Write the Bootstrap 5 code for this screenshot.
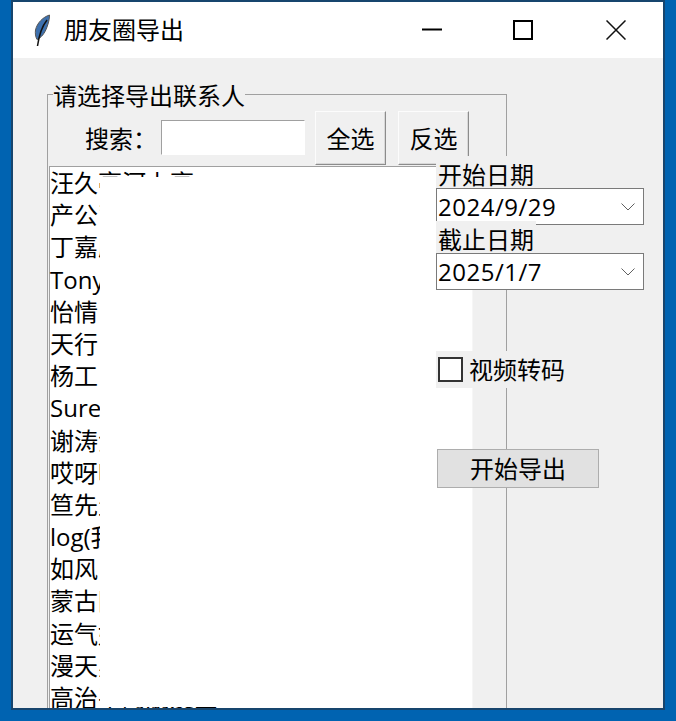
<!DOCTYPE html>
<html lang="zh-CN">
<head>
  <meta charset="UTF-8" />
  <meta name="viewport" content="width=device-width, initial-scale=1" />
  <title>朋友圈导出</title>
  <link href="https://cdn.jsdelivr.net/npm/bootstrap@5.3.3/dist/css/bootstrap.min.css" rel="stylesheet">
  <style>
    html, body { height: 721px; overflow: hidden; }
    body {
      background: #0063b1;
      color: #000;
      font-family: "Open Sans", "Noto Sans CJK SC", sans-serif;
      font-size: 24px;
      line-height: 32px;
    }
    .tk-window {
      width: 654px;
      height: 710px;
      margin-left: 11px;
      border: 2px solid #17456d;
      background: #f0f0f0;
      overflow: hidden;
      position: relative;
    }
    .tk-title { height: 56px; background: #fff; }
    .tk-feather { margin-left: 18px; margin-top: 1px; width: 22px; height: 34px; }
    .tk-title-text { margin-left: 11px; }
    .tk-ctrl { height: 56px; }
    .tk-ctrl-min { width: 90px; }
    .tk-ctrl-max { width: 92px; }
    .tk-ctrl-close { width: 94px; }
    .tk-frame {
      width: 460px;
      height: 700px;
      margin: 36px 0 0 34px;
      border: 1px solid #a0a0a0;
      position: relative;
    }
    .tk-legend {
      position: absolute;
      left: 5px;
      top: -14px;
      background: #f0f0f0;
      line-height: 30px;
    }
    .tk-search { height: 54px; margin-top: 16px; padding-left: 37px; }
    .tk-search-label { width: 76px; padding-top: 1px; }
    .tk-entry {
      width: 144px;
      height: 35px;
      margin: 9px 10px 0 0;
      padding: 0 2px;
      background: #fff;
      border: 1px solid;
      border-color: #a0a0a0 #fff #fff #a0a0a0;
      box-shadow: none;
    }
    .tk-btn {
      width: 71px;
      height: 54px;
      padding: 1px 0 0;
      color: #000;
      font-size: 24px;
      background: #f0f0f0;
      border: 1px solid;
      border-color: #fcfcfc #8c8c8c #8c8c8c #fcfcfc;
      box-shadow: inset -1px -1px 0 #d8d8d8;
    }
    .tk-btn-gap { margin-left: 12px; }
    .tk-list {
      position: relative;
      width: 424px;
      height: 600px;
      margin: 1px 0 0 1px;
      background: #fff;
      border: 1px solid #a0a0a0;
      border-width: 1px 1px 0 1px;
      border-right-color: #f6f6f6;
      font-size: 24px;
      line-height: 32.2px;
      white-space: nowrap;
    }
    .tk-row { height: 32.2px; }
    .tk-repaint {
      position: absolute;
      left: 50px;
      top: 10px;
      width: 372px;
      height: 530px;
      background: #fff;
    }
    .tk-side {
      position: absolute;
      left: 423px;
      top: 154px;
      width: 208px;
    }
    .tk-side-label {
      position: relative;
      width: 100px;
      height: 32px;
      padding: 3px 0 0 2px;
      background: #f0f0f0;
    }
    .tk-side-label.tk-over { margin-top: -4px; }
    .tk-date {
      height: 37px;
      padding: 0 8px 0 1px;
      background: #fff;
      border: 1px solid #7a7a7a;
      line-height: 35px;
      letter-spacing: 0.5px;
    }
    .tk-check {
      width: 131px;
      height: 37px;
      margin-top: 61px;
      padding-left: 2px;
      background: #f0f0f0;
    }
    .tk-box {
      width: 25px;
      height: 25px;
      margin-right: 6px;
      background: #fff;
      border: 2px solid #333;
    }
    .tk-start {
      width: 162px;
      height: 39px;
      margin: 61px 0 0 1px;
      padding: 0;
      color: #000;
      font-size: 24px;
      line-height: 37px;
      background: #e1e1e1;
      border: 1px solid #adadad;
    }
  </style>
</head>
<body>
  <div class="tk-window">
    <div class="tk-title d-flex align-items-center">
      <svg class="tk-feather" viewBox="0 0 22 34">
        <path d="M18.5 1 C12 3 6 9 4.5 16 C4 19 4.5 23 6 25.5 C10 24 14 19 16 13 C17.5 9 18.5 5 18.5 1 Z" fill="#3d70ad" stroke="#555" stroke-width="1"/>
        <path d="M16 6 C12 11 8.500 18 6.500 32" fill="none" stroke="#111" stroke-width="1.500"/>
      </svg>
      <span class="tk-title-text flex-grow-1">朋友圈导出</span>
      <div class="tk-ctrl tk-ctrl-min d-flex align-items-center justify-content-center">
        <svg width="20" height="20" viewBox="0 0 20 20"><path d="M0 9.500H20" stroke="#000" stroke-width="2"/></svg>
      </div>
      <div class="tk-ctrl tk-ctrl-max d-flex align-items-center justify-content-center">
        <svg width="20" height="20" viewBox="0 0 20 20"><rect x="1" y="1" width="18" height="18" fill="none" stroke="#000" stroke-width="2"/></svg>
      </div>
      <div class="tk-ctrl tk-ctrl-close d-flex align-items-center justify-content-center">
        <svg width="20" height="20" viewBox="0 0 20 20"><path d="M0.500 0.500L19.500 19.500M19.500 0.500L0.500 19.500" stroke="#111" stroke-width="1.500"/></svg>
      </div>
    </div>

    <div class="tk-frame">
      <span class="tk-legend">请选择导出联系人</span>
      <div class="tk-search d-flex align-items-start">
        <span class="tk-search-label align-self-center">搜索：</span>
        <input type="text" class="form-control rounded-0 tk-entry" />
        <button class="btn rounded-0 tk-btn">全选</button>
        <button class="btn rounded-0 tk-btn tk-btn-gap">反选</button>
      </div>
      <div class="tk-list">
        <div class="tk-row">汪久亭河上亭</div>
        <div class="tk-row">产公司</div>
        <div class="tk-row">丁嘉欣</div>
        <div class="tk-row">Tony</div>
        <div class="tk-row">怡情</div>
        <div class="tk-row">天行</div>
        <div class="tk-row">杨工</div>
        <div class="tk-row">Sure</div>
        <div class="tk-row">谢涛涛</div>
        <div class="tk-row">哎呀呀</div>
        <div class="tk-row">笪先生</div>
        <div class="tk-row">log(我</div>
        <div class="tk-row">如风</div>
        <div class="tk-row">蒙古国</div>
        <div class="tk-row">运气好</div>
        <div class="tk-row">漫天星</div>
        <div class="tk-row">高治平的朋友圈</div>
        <div class="tk-repaint"></div>
      </div>
    </div>

    <div class="tk-side">
      <div class="tk-side-label">开始日期</div>
      <div class="tk-date d-flex justify-content-between align-items-center">
        <span>2024/9/29</span>
        <svg width="14" height="8" viewBox="0 0 14 8"><path d="M0.500 0.500L7 7L13.500 0.500" fill="none" stroke="#606060"/></svg>
      </div>
      <div class="tk-side-label tk-over">截止日期</div>
      <div class="tk-date d-flex justify-content-between align-items-center">
        <span>2025/1/7</span>
        <svg width="14" height="8" viewBox="0 0 14 8"><path d="M0.500 0.500L7 7L13.500 0.500" fill="none" stroke="#606060"/></svg>
      </div>
      <div class="tk-check d-flex align-items-center">
        <span class="tk-box"></span>
        <span>视频转码</span>
      </div>
      <button class="btn rounded-0 tk-start d-block">开始导出</button>
    </div>
  </div>
  <script src="https://cdn.jsdelivr.net/npm/bootstrap@5.3.3/dist/js/bootstrap.bundle.min.js"></script>
</body>
</html>
